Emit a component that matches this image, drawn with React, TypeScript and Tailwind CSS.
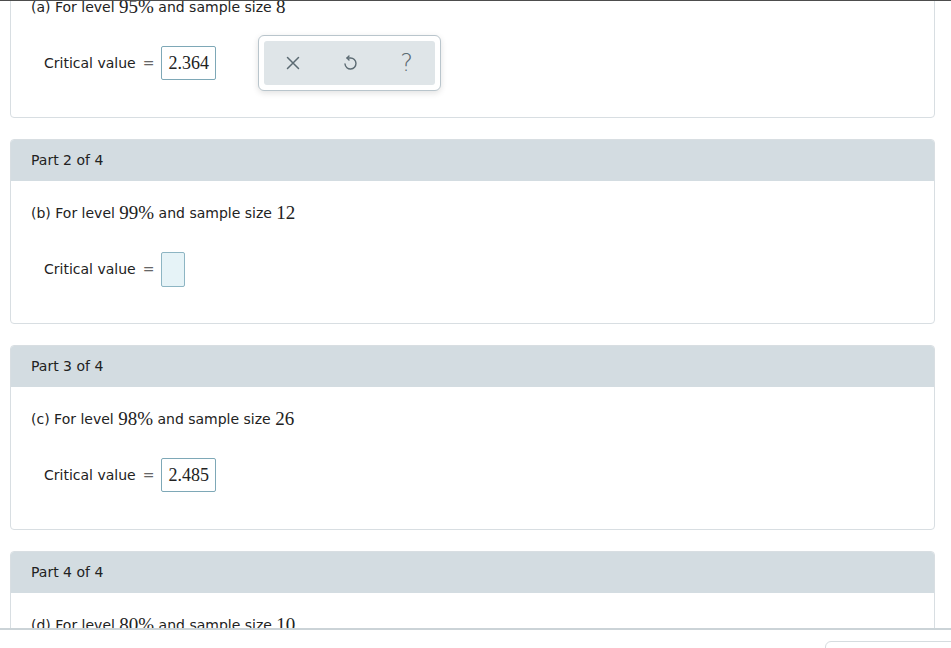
import React from 'react';

const sans = "font-['DejaVu_Sans','Verdana',sans-serif]";
const serif = "font-['Liberation_Serif','Times_New_Roman',serif]";

function Num({ children }: { children: React.ReactNode }) {
  return <span className={`${serif} text-[19px]`}>{children}</span>;
}

function Toolbar() {
  return (
    <div className="absolute left-[227px] top-1/2 -translate-y-1/2 w-[183px] h-[56px] bg-white border border-[#b9c5cc] rounded-[6px] shadow-[0_2px_6px_rgba(0,0,0,0.12)] p-[5px]">
      <div className="h-full bg-[#dfe5e8] rounded-[3px] grid grid-cols-3 items-center justify-items-center text-[#5b6a72]">
        <svg width="16" height="16" viewBox="0 0 16 16" fill="none" stroke="currentColor" strokeWidth="1.5" strokeLinecap="round">
          <path d="M2.5 2.5 L13.5 13.5 M13.5 2.5 L2.5 13.5" />
        </svg>
        <svg width="16" height="18" viewBox="0 0 16 18" fill="none" stroke="currentColor" strokeWidth="1.4" strokeLinecap="round" strokeLinejoin="round">
          <path d="M7 2 L5 4 L7 6" />
          <path d="M5 4 H8.5 A5.5 5.5 0 1 1 3 10" />
        </svg>
        <span className={`${sans} text-[24px] leading-none font-light text-[#5b6a72]`}>?</span>
      </div>
    </div>
  );
}

function Card({
  part,
  letter,
  level,
  size,
  value,
  tools,
}: {
  part: number;
  letter: string;
  level: string;
  size: string;
  value?: string;
  tools?: boolean;
}) {
  return (
    <div className="border border-[#d8dee2] rounded-[4px] bg-white shrink-0">
      <div className="h-[41px] bg-[#d3dce1] rounded-t-[3px] px-[20px] flex items-center text-[14px] text-[#222]">
        Part {part} of 4
      </div>
      <div className="px-[20px] pt-[22px] pb-[37px] text-[#222]">
        <div className="h-[20px] flex items-center text-[14px] whitespace-pre">
          ({letter}) For level <Num>{level}%</Num> and sample size <Num>{size}</Num>
        </div>
        <div className="relative mt-[29px] pl-[13px] h-[34px] flex items-center text-[14px]">
          <span>Critical value</span>
          <span className="mx-[7px] text-[#666] text-[14px]">=</span>
          {value ? (
            <div className={`h-[34px] px-[6px] flex items-center border border-[#7ea8b7] rounded-[2px] ${serif} text-[18px] text-[#222]`}>
              {value}
            </div>
          ) : (
            <div className="h-[35px] w-[24px] bg-[#e6f3f7] border border-[#8db5c3] rounded-[2px]" />
          )}
          {tools && <Toolbar />}
        </div>
      </div>
    </div>
  );
}

export default function App() {
  return (
    <div className={`w-[951px] h-[648px] flex flex-col bg-white overflow-hidden ${sans}`}>
      <div className="h-px bg-[#4d4d4d] shrink-0" />
      <div className="flex-1 overflow-hidden">
        <div className="-mt-[68px] pl-[10px] pr-[16px] flex flex-col gap-[21px]">
          <Card part={1} letter="a" level="95" size="8" value="2.364" tools />
          <Card part={2} letter="b" level="99" size="12" />
          <Card part={3} letter="c" level="98" size="26" value="2.485" />
          <Card part={4} letter="d" level="80" size="10" />
        </div>
      </div>
      <div className="h-[20px] shrink-0 border-t-2 border-[#cbd3d7] flex justify-end pt-[11px]">
        <div className="w-[140px] h-[20px] border border-[#d6dcdf] rounded-[6px] mr-[-14px]" />
      </div>
    </div>
  );
}
